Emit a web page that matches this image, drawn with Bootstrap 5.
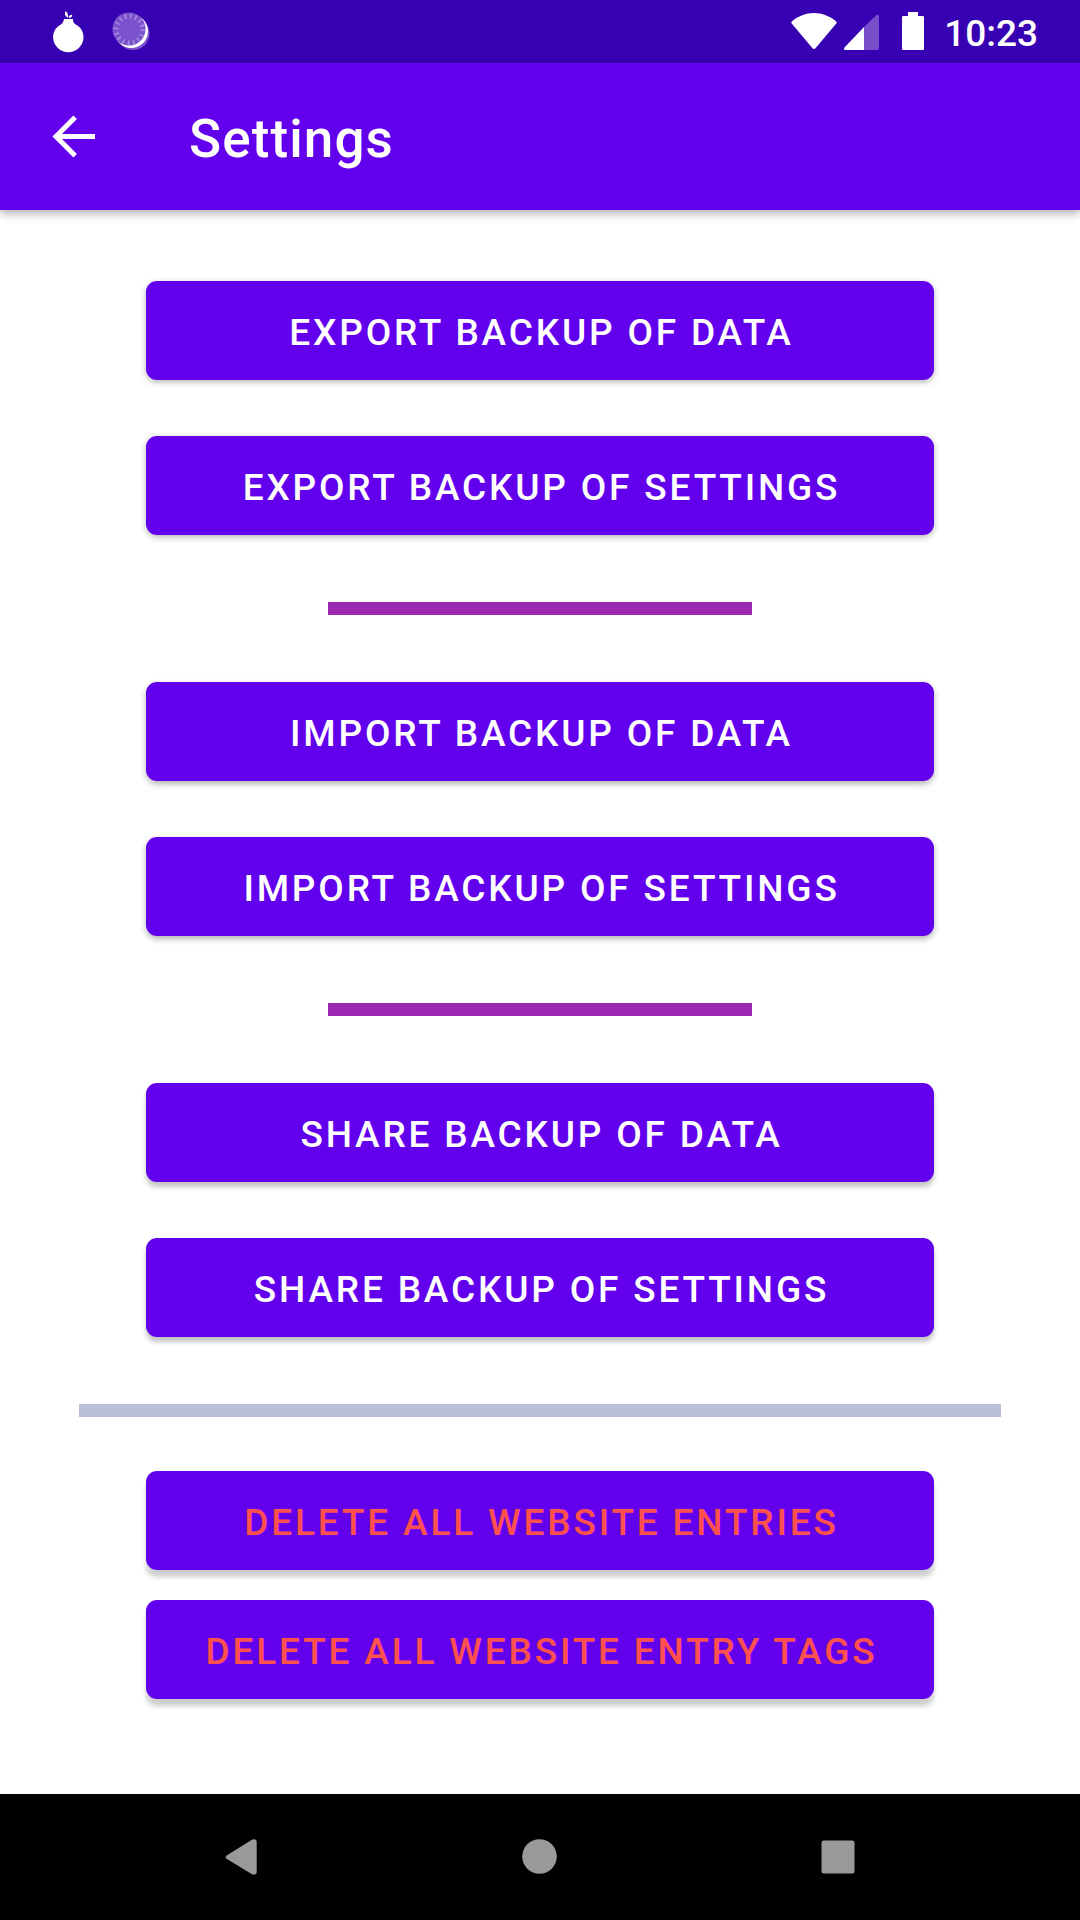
<!DOCTYPE html>
<html lang="en">
<head>
<meta charset="utf-8">
<meta name="viewport" content="width=device-width, initial-scale=1">
<title>Settings</title>
<link href="https://cdn.jsdelivr.net/npm/bootstrap@5.3.0/dist/css/bootstrap.min.css" rel="stylesheet">
<style>
  body { font-family: Roboto, sans-serif; background: #fff; height: 1920px; overflow: hidden; }
  svg { display: block; flex: none; }
  .status-bar { height: 63px; background: #3700b3; padding: 0 42px 0 50px; }
  .status-icons { gap: 3px; }
  .clock { font-size: 37px; line-height: 63px; font-weight: 500; padding-top: 2px; }
  .app-bar { height: 147px; background: #6200ee; padding: 0 50px; gap: 92px; box-shadow: 0 3px 9px rgba(0,0,0,.35); }
  .app-title { font-size: 53px; line-height: 62px; font-weight: 500; letter-spacing: 1.1px; padding-top: 4px; }
  .settings-list { padding: 71px 79px 0; }
  .btn-action { width: 788px; height: 99px; padding: 4px 0 0 3px; border: 0; border-radius: 11px; font-size: 37px; line-height: 1; font-weight: 500; letter-spacing: 2.83px;
    --bs-btn-color: #fff; --bs-btn-bg: #6200ee; --bs-btn-hover-color: #fff; --bs-btn-hover-bg: #5300ca; --bs-btn-active-bg: #5300ca; --bs-btn-active-color: #fff; }
  .level-a { box-shadow: 0 2px 6px rgba(0,0,0,.3); }
  .level-b { box-shadow: 0 3px 6px rgba(0,0,0,.3); }
  .level-c { box-shadow: 0 5px 5px rgba(0,0,0,.24); }
  .level-d { box-shadow: 0 7px 5px rgba(0,0,0,.2); }
  .btn-erase { --bs-btn-color: #ff5050; --bs-btn-hover-color: #ff5050; --bs-btn-active-color: #ff5050; }
  .button-group { gap: 56px; }
  .rule-short { width: 424px; height: 13px; margin: 67px 0; background: #9c27b0; }
  .rule-long { width: 922px; height: 13px; margin: 67px 0 54px; background: #bbbfda; }
  .erase-group { gap: 30px; }
  .nav-keys { height: 126px; background: #000; }
</style>
<script src="https://cdn.jsdelivr.net/npm/bootstrap@5.3.0/dist/js/bootstrap.bundle.min.js"></script>
</head>
<body class="d-flex flex-column">
  <header class="status-bar d-flex justify-content-between text-white flex-shrink-0">
    <svg width="110" height="63" viewBox="50 0 110 63" aria-hidden="true">
      <path fill="#fff" d="M64 19h9c0 3 .6 4.500 3.500 6C81 27.500 83.500 32 83.500 37a15.200 15.200 0 0 1-30.400 0c0-5 2.600-9.500 7-12 2.500-1.400 3.400-3 3.900-6zM65.500 11c2.200 1.500 2.800 3.500 2.500 7-3-1.800-3.800-4-2.500-7zM68.700 18c0-2 1.200-3.200 3.600-3.200-.3 2.200-1.300 3.200-3.600 3.200z"/>
      <circle cx="133" cy="33.500" r="16.500" fill="#7b52cd"/>
      <circle cx="131.200" cy="31.200" r="16.800" fill="#fff"/>
      <circle cx="129" cy="29" r="16.600" fill="#7b52cd"/>
      <circle cx="129.500" cy="29.500" r="13.400" fill="none" stroke="#a78ddd" stroke-width="5" stroke-dasharray="1.600 3.662"/>
    </svg>
    <div class="status-icons d-flex">
      <svg width="151" height="63" viewBox="790 0 151 63" aria-hidden="true">
        <path fill="#fff" d="M791.800 21.500C798 16 806 13 814 13s16 3 22.200 8.500c.6.600.6 1.300.1 2L815.500 48.200c-.8 1-2.200 1-3 0L791.700 23.500c-.5-.7-.5-1.400.1-2z"/>
        <path fill="#774fcb" d="M864 27l12.300-11.700c1.200-1 2.700-.3 2.700 1.300V48c0 1.300-.7 2-2 2h-13z"/>
        <path fill="#fff" d="M864 27v23h-18.500c-1.500 0-2-1.500-1-2.500z"/>
        <path fill="#fff" d="M908 12h10v4h4.500c1 0 1.500.5 1.500 1.500v31c0 1-.5 1.500-1.500 1.500h-19c-1 0-1.500-.5-1.500-1.500v-31c0-1 .5-1.500 1.500-1.500h4.500z"/>
      </svg>
      <span class="clock">10:23</span>
    </div>
  </header>

  <nav class="app-bar d-flex align-items-center text-white flex-shrink-0">
    <svg width="47" height="47" viewBox="50 113 47 47" role="img" aria-label="Back"><path d="M95 136.500H57M75.200 117.300L56 136.500l19.200 19.200" fill="none" stroke="#fff" stroke-width="5"/></svg>
    <h1 class="app-title mb-0">Settings</h1>
  </nav>

  <main class="settings-list d-flex flex-column align-items-center flex-grow-1">
    <section class="button-group d-flex flex-column">
      <button type="button" class="btn btn-action level-a">EXPORT BACKUP OF DATA</button>
      <button type="button" class="btn btn-action level-a">EXPORT BACKUP OF SETTINGS</button>
    </section>
    <div class="rule-short"></div>
    <section class="button-group d-flex flex-column">
      <button type="button" class="btn btn-action level-b">IMPORT BACKUP OF DATA</button>
      <button type="button" class="btn btn-action level-b">IMPORT BACKUP OF SETTINGS</button>
    </section>
    <div class="rule-short"></div>
    <section class="button-group d-flex flex-column">
      <button type="button" class="btn btn-action level-c">SHARE BACKUP OF DATA</button>
      <button type="button" class="btn btn-action level-c">SHARE BACKUP OF SETTINGS</button>
    </section>
    <div class="rule-long"></div>
    <section class="erase-group d-flex flex-column">
      <button type="button" class="btn btn-action btn-erase level-d">DELETE ALL WEBSITE ENTRIES</button>
      <button type="button" class="btn btn-action btn-erase level-d">DELETE ALL WEBSITE ENTRY TAGS</button>
    </section>
  </main>

  <footer class="nav-keys flex-shrink-0">
    <svg width="1080" height="126" viewBox="0 1794 1080 126" fill="#999" aria-hidden="true">
      <path d="M227 1855.300l24.500-15.300c2.500-1.500 5.200-.5 5.200 2v30c0 2.500-2.700 3.500-5.200 2L227 1859c-1.800-1-1.800-2.700 0-3.700z"/>
      <circle cx="539.500" cy="1856.500" r="17.300"/>
      <rect x="821.500" y="1840.500" width="33" height="33" rx="2.500"/>
    </svg>
  </footer>
</body>
</html>
